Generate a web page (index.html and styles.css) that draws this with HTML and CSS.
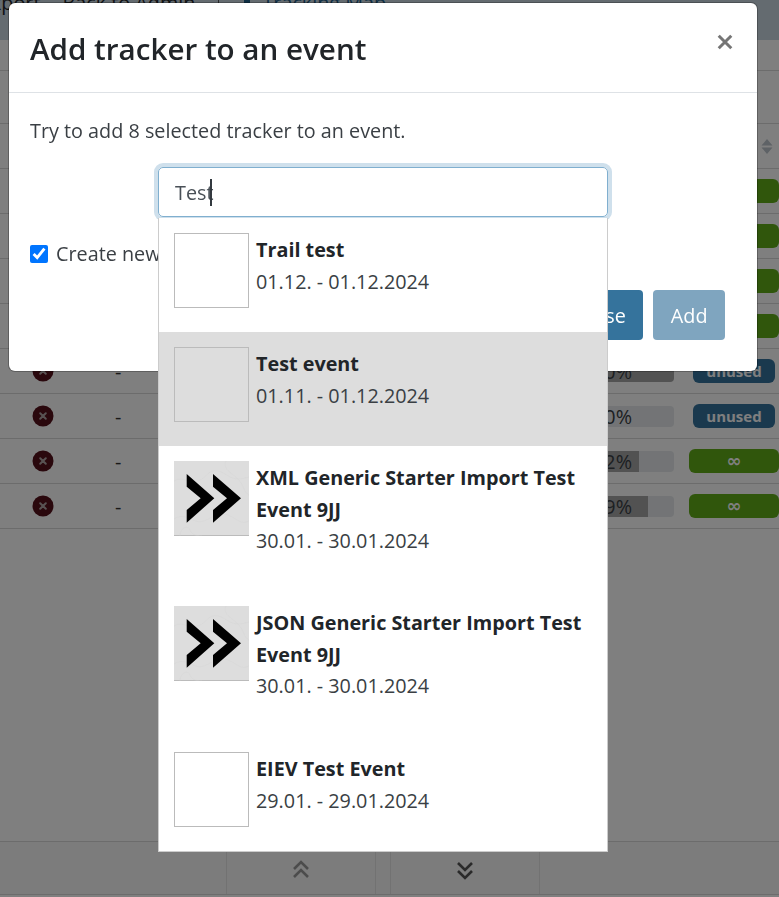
FILE: index.html
```html
<!DOCTYPE html>
<html lang="en">
<head>
  <meta charset="UTF-8" />
  <meta name="viewport" content="width=device-width, initial-scale=1.0" />
  <title>Add tracker to an event</title>
  <link rel="stylesheet" href="styles.css">
</head>
<body>
  <nav class="topbar">
    <span class="topbar-link topbar-cut">Export</span>
    <span class="topbar-link">Back to Admin</span>
    <span class="topbar-sep"></span>
    <svg class="topbar-icon" viewBox="0 0 22 22"><path d="M8 0h6v8h8v6h-8v8H8v-8H0V8h8z"/></svg>
    <span class="topbar-link topbar-map">Tracking Map</span>
  </nav>

  <div class="toolbar"></div>
  <div class="filters"></div>
  <div class="table-head">
    <svg class="sort-arrows" viewBox="0 0 12 15"><path d="M6 0l5.500 6.500H.5zM.5 8.500h11L6 15z"/></svg>
  </div>

  <div class="rows">
    <div class="row"><span></span><span></span><span></span><span class="pill pill-green">&infin;</span></div>
    <div class="row"><span></span><span></span><span></span><span class="pill pill-green">&infin;</span></div>
    <div class="row"><span></span><span></span><span></span><span class="pill pill-green">&infin;</span></div>
    <div class="row"><span></span><span></span><span></span><span class="pill pill-green">&infin;</span></div>
    <div class="row">
      <span class="state"><svg viewBox="0 0 22 22"><circle cx="11" cy="11" r="10.500" fill="#54101a"/><path d="M8.200 8.200l5.600 5.600M13.800 8.200l-5.600 5.600" stroke="#b0a5a5" stroke-width="2" stroke-linecap="round"/></svg></span>
      <span class="dash">-</span>
      <span class="bar-wrap"><span class="bar"><span class="bar-fill" style="width:100%"></span></span><span class="bar-label">100%</span></span>
      <span class="pill pill-blue">unused</span>
    </div>
    <div class="row">
      <span class="state"><svg viewBox="0 0 22 22"><circle cx="11" cy="11" r="10.500" fill="#54101a"/><path d="M8.200 8.200l5.600 5.600M13.800 8.200l-5.600 5.600" stroke="#b0a5a5" stroke-width="2" stroke-linecap="round"/></svg></span>
      <span class="dash">-</span>
      <span class="bar-wrap"><span class="bar"></span><span class="bar-label">0%</span></span>
      <span class="pill pill-blue">unused</span>
    </div>
    <div class="row">
      <span class="state"><svg viewBox="0 0 22 22"><circle cx="11" cy="11" r="10.500" fill="#54101a"/><path d="M8.200 8.200l5.600 5.600M13.800 8.200l-5.600 5.600" stroke="#b0a5a5" stroke-width="2" stroke-linecap="round"/></svg></span>
      <span class="dash">-</span>
      <span class="bar-wrap"><span class="bar"><span class="bar-fill" style="width:73%"></span></span><span class="bar-label">72%</span></span>
      <span class="pill pill-green">&infin;</span>
    </div>
    <div class="row">
      <span class="state"><svg viewBox="0 0 22 22"><circle cx="11" cy="11" r="10.500" fill="#54101a"/><path d="M8.200 8.200l5.600 5.600M13.800 8.200l-5.600 5.600" stroke="#b0a5a5" stroke-width="2" stroke-linecap="round"/></svg></span>
      <span class="dash">-</span>
      <span class="bar-wrap"><span class="bar"><span class="bar-fill" style="width:80%"></span></span><span class="bar-label">79%</span></span>
      <span class="pill pill-green">&infin;</span>
    </div>
  </div>

  <div class="pager">
    <div class="pager-cell">
      <svg class="pager-icon pager-up" viewBox="0 0 18 20"><path d="M2 9l7-7 7 7M2 17l7-7 7 7"/></svg>
    </div>
    <div class="pager-gap"></div>
    <div class="pager-cell">
      <svg class="pager-icon pager-down" viewBox="0 0 18 20"><path d="M2 3l7 7 7-7M2 11l7 7 7-7"/></svg>
    </div>
  </div>

  <div class="backdrop"></div>

  <div class="modal">
    <div class="modal-header">
      <h4 class="modal-title">Add tracker to an event</h4>
      <svg class="modal-close" viewBox="0 0 14 14"><path d="M1.500 1.500l11 11M12.500 1.500l-11 11"/></svg>
    </div>
    <div class="modal-body">
      <p class="modal-text">Try to add 8 selected tracker to an event.</p>
      <div class="search-row">
        <div class="search-box">Test<span class="caret"></span></div>
      </div>
      <label class="check-row"><input type="checkbox" checked /> Create new</label>
    </div>
    <div class="modal-footer">
      <button class="btn btn-close">Close</button>
      <button class="btn btn-add">Add</button>
    </div>
  </div>

  <ul class="results">
    <li class="result">
      <span class="thumb"></span>
      <div class="result-text"><div class="result-name">Trail test</div><div class="result-date">01.12. - 01.12.2024</div></div>
    </li>
    <li class="result result-active">
      <span class="thumb"></span>
      <div class="result-text"><div class="result-name">Test event</div><div class="result-date">01.11. - 01.12.2024</div></div>
    </li>
    <li class="result">
      <span class="thumb thumb-logo"><svg viewBox="0 0 75 75"><path class="topo" d="M0 20c10-6 14 4 24 0s10-12 20-10 12 12 31 6M0 58c12-8 20 6 30 2s14-10 24-6 12 10 21 6M52 0c-4 8 6 12 12 18s6 14 11 16M6 75c0-8 8-12 10-6s10 6 12 6"/><path d="M12.700 13l27.600 24.300-27.600 24.400V49l14-11.700-14-11.600zM39 13l28 24.300-28 24.400V49l14-11.700L39 25.700z"/></svg></span>
      <div class="result-text"><div class="result-name">XML Generic Starter Import Test Event 9JJ</div><div class="result-date">30.01. - 30.01.2024</div></div>
    </li>
    <li class="result">
      <span class="thumb thumb-logo"><svg viewBox="0 0 75 75"><path class="topo" d="M0 20c10-6 14 4 24 0s10-12 20-10 12 12 31 6M0 58c12-8 20 6 30 2s14-10 24-6 12 10 21 6M52 0c-4 8 6 12 12 18s6 14 11 16M6 75c0-8 8-12 10-6s10 6 12 6"/><path d="M12.700 13l27.600 24.300-27.600 24.400V49l14-11.700-14-11.600zM39 13l28 24.300-28 24.400V49l14-11.700L39 25.700z"/></svg></span>
      <div class="result-text"><div class="result-name">JSON Generic Starter Import Test Event 9JJ</div><div class="result-date">30.01. - 30.01.2024</div></div>
    </li>
    <li class="result">
      <span class="thumb"></span>
      <div class="result-text"><div class="result-name">EIEV Test Event</div><div class="result-date">29.01. - 29.01.2024</div></div>
    </li>
  </ul>
</body>
</html>
```

FILE: styles.css
```css
* {
  box-sizing: border-box;
}

html, body {
  height: 100%;
}

body {
  margin: 0;
  font-family: 'Open Sans', 'Noto Sans', sans-serif;
  font-size: 19.8px;
  color: #212529;
  background: #fff;
  overflow: hidden;
}

.topbar {
  height: 40px;
  display: flex;
  align-items: flex-start;
  gap: 22px;
  background: #c8d6e0;
  white-space: nowrap;
  overflow: hidden;
}

.topbar-link {
  margin-top: -11px;
}

.topbar-cut {
  margin-left: -20px;
}

.topbar-sep {
  width: 1px;
  height: 12px;
  margin-left: 1px;
  background: #555;
}

.topbar-icon {
  width: 22px;
  height: 22px;
  margin: -15px 0 0 -5px;
  fill: #1c5c86;
}

.topbar-map {
  color: #1c5c86;
  margin-left: -18px;
}

.toolbar {
  height: 31px;
  border-bottom: 1px solid #d8d8d8;
}

.filters {
  height: 53px;
  border-bottom: 1px solid #d8d8d8;
}

.table-head {
  height: 45px;
  border-bottom: 1px solid #d8d8d8;
  display: flex;
  justify-content: flex-end;
  align-items: center;
  padding-right: 6px;
}

.sort-arrows {
  width: 12px;
  height: 15px;
  fill: #bcc4cc;
}

.row {
  height: 45px;
  display: grid;
  grid-template-columns: 86px 150px 1fr 90px;
  align-items: center;
  border-bottom: 1px solid #d8d8d8;
}

.state {
  display: flex;
  justify-content: center;
}

.state svg {
  width: 22px;
  height: 22px;
}

.dash {
  color: #333;
  padding-left: 29px;
}

.bar-wrap {
  position: relative;
  justify-self: end;
  width: 128px;
  height: 21px;
  margin-right: 15px;
  padding-right: 42px;
  display: flex;
  justify-content: flex-end;
  align-items: center;
}

.bar {
  position: absolute;
  inset: 0;
  background: #e6e9ec;
  border-radius: 4px;
  overflow: hidden;
}

.bar-fill {
  display: block;
  height: 100%;
  background: #a4a4a4;
}

.bar-label {
  position: relative;
  color: #3a3f44;
}

.pill {
  height: 24px;
  border-radius: 6px;
  color: #fff;
  font-weight: 700;
  font-size: 15px;
  line-height: 24px;
  text-align: center;
}

.pill-green {
  background: #60ac18;
  font-family: 'DejaVu Sans', sans-serif;
  font-size: 18px;
}

.pill-blue {
  background: #35739c;
  width: 82px;
  margin-right: 4px;
  justify-self: end;
}

.pager {
  position: absolute;
  top: 841px;
  left: 0;
  right: 0;
  height: 54px;
  background: #f8f8f8;
  border-top: 1px solid #d8d8d8;
  border-bottom: 1px solid #d8d8d8;
  display: flex;
  padding-left: 226px;
}

.pager-cell {
  width: 150px;
  border-left: 1px solid #e4e4e4;
  border-right: 1px solid #e4e4e4;
  display: flex;
  justify-content: center;
  padding-top: 18px;
}

.pager-gap {
  width: 14px;
}

.pager-icon {
  width: 18px;
  height: 20px;
  fill: none;
  stroke-width: 2.6;
}

.pager-up {
  stroke: #999;
}

.pager-down {
  stroke: #555;
}

.backdrop {
  position: fixed;
  inset: 0;
  background: rgba(0, 0, 0, 0.5);
}

.modal {
  position: absolute;
  top: 3px;
  left: 9px;
  width: 748px;
  height: 368px;
  background: #fff;
  border-radius: 6px;
  box-shadow: 0 0 0 1px rgba(0, 0, 0, 0.25);
  display: flex;
  flex-direction: column;
}

.modal-header {
  height: 90px;
  border-bottom: 1px solid #dee2e6;
  display: flex;
  justify-content: space-between;
  align-items: flex-start;
  padding: 28px 24px 0 21px;
}

.modal-title {
  margin: 0;
  font-size: 29.6px;
  font-weight: 600;
  line-height: 36px;
}

.modal-close {
  width: 16px;
  height: 16px;
  margin-top: 3px;
  fill: none;
  stroke: #757575;
  stroke-width: 2.6;
}

.modal-body {
  padding: 0 21px;
  flex: 1;
}

.modal-text {
  margin: 24px 0 0;
  line-height: 28px;
  color: #3a3f44;
}

.search-row {
  padding-left: 128px;
  margin-top: 22px;
}

.search-box {
  width: 450px;
  height: 50px;
  border: 1px solid #80afcf;
  border-radius: 5px;
  box-shadow: 0 0 0 4px #cfe0ec;
  padding: 1px 16px 0;
  color: #495057;
  display: flex;
  align-items: center;
}

.caret {
  width: 2px;
  height: 27px;
  background: #33393f;
  margin-left: -3px;
}

.check-row {
  display: flex;
  align-items: center;
  gap: 8px;
  margin-top: 23px;
  white-space: nowrap;
  color: #3a3f44;
}

.check-row input {
  flex: none;
  width: 18px;
  height: 18px;
  margin: 0;
}

.modal-footer {
  display: flex;
  justify-content: flex-end;
  gap: 10px;
  padding: 0 32px 31px 0;
}

.btn {
  height: 50px;
  border: 0;
  border-radius: 4px;
  padding: 0 17.5px;
  color: #fff;
  font-family: inherit;
  font-size: 19.8px;
}

.btn-close {
  background: #35739c;
}

.btn-add {
  background: #7fa5bf;
}

.results {
  position: absolute;
  top: 218px;
  left: 158px;
  width: 450px;
  height: 634px;
  margin: 0;
  padding: 0;
  list-style: none;
  background: #fff;
  border: 1px solid #ccc;
  border-top: 0;
}

.result {
  display: flex;
  gap: 7px;
  padding: 15px 15px 0;
  height: 114px;
}

.result:nth-child(3) {
  height: 145px;
}

.result:nth-child(4) {
  height: 146px;
}

.result-active {
  background: #ddd;
}

.result-text {
  padding-top: 1px;
}

.thumb {
  flex: none;
  width: 75px;
  height: 75px;
  border: 1px solid #bbb;
}

.thumb-logo {
  border: 0;
  border-bottom: 1px solid #bbb;
  background: #ddd;
}

.thumb-logo svg {
  display: block;
  width: 75px;
  height: 75px;
  fill: #000;
}

.thumb-logo .topo {
  fill: none;
  stroke: #d3d3d3;
  stroke-width: 0.4;
}

.result-name {
  font-weight: 700;
  line-height: 31.5px;
}

.result-date {
  line-height: 31.5px;
  color: #3a3f44;
}
```
